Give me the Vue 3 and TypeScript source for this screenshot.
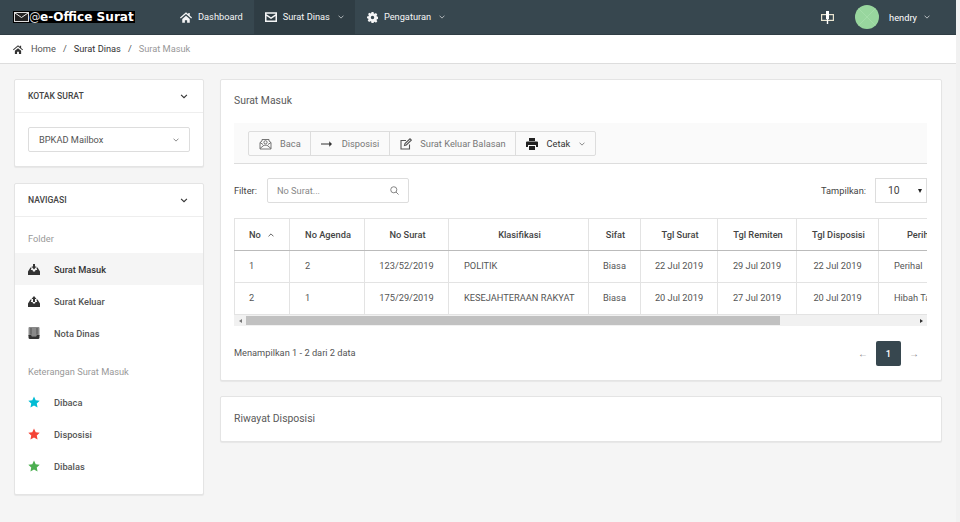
<script setup lang="ts">
const columns = [
  { label: 'No', width: 55 },
  { label: 'No Agenda', width: 75 },
  { label: 'No Surat', width: 84 },
  { label: 'Klasifikasi', width: 140 },
  { label: 'Sifat', width: 52 },
  { label: 'Tgl Surat', width: 77 },
  { label: 'Tgl Remiten', width: 79 },
  { label: 'Tgl Disposisi', width: 82 },
  { label: 'Perihal', width: 90 },
]
const rows = [
  ['1', '2', '123/52/2019', 'POLITIK', 'Biasa', '22 Jul 2019', '29 Jul 2019', '22 Jul 2019', 'Perihal'],
  ['2', '1', '175/29/2019', 'KESEJAHTERAAN RAKYAT', 'Biasa', '20 Jul 2019', '27 Jul 2019', '20 Jul 2019', 'Hibah Tahun'],
]
const leftAligned = [0, 1, 3, 8]
const stars = [
  { label: 'Dibaca', color: '#00bcd4' },
  { label: 'Disposisi', color: '#f44336' },
  { label: 'Dibalas', color: '#4caf50' },
]
</script>

<template>
  <div class="page">
    <div class="main-col">
      <header class="navbar">
        <div class="brand">
          <div class="brand-box">
            <svg class="brand-mail" width="15" height="10" viewBox="0 0 15 10">
              <rect x="0.5" y="0.5" width="14" height="9" fill="#222" stroke="#ddd" />
              <path d="M1 1l6.500 4.500L14 1" fill="none" stroke="#eee" stroke-width="1" />
            </svg>
            <span class="brand-at">@</span>
            <span class="brand-text">e-Office Surat</span>
          </div>
        </div>
        <nav class="nav">
          <a class="nav-item">
            <svg width="12" height="11" viewBox="0 0 16 14"><path d="M8 0L0 7l1 1.200L8 2.300l7 5.900L16 7l-3-2.600V1h-2v1.700zM3 9v5h3.500v-3.500h3V14H13V9L8 4.800z" fill="#fff" /></svg>
            <span>Dashboard</span>
          </a>
          <a class="nav-item active">
            <svg width="12" height="10" viewBox="0 0 16 13"><path d="M0 0h16v13H0zm2 2v.7l6 4 6-4V2zm12 3L8 9 2 5v6h12z" fill="#fff" fill-rule="evenodd" /></svg>
            <span>Surat Dinas</span>
            <svg class="caret" width="6" height="4" viewBox="0 0 8 5"><path d="M.7.7L4 4l3.300-3.300" fill="none" stroke="#fff" stroke-opacity=".85" /></svg>
          </a>
          <a class="nav-item">
            <svg width="11" height="11" viewBox="0 0 16 16"><path d="M6.500 0h3l.4 2.100 1.300.6L13 1.500l2 2-1.200 1.800.6 1.300 2.100.4v3l-2.100.4-.6 1.300 1.200 1.800-2 2-1.800-1.200-1.300.6L9.500 16h-3l-.4-2.100-1.300-.6L3 14.500l-2-2 1.200-1.800-.6-1.300L0 9V6.500l2.100-.4.6-1.300L1.500 3 3.500 1l1.800 1.200 1-.6zM8 5.500a2.500 2.500 0 100 5 2.500 2.500 0 000-5z" fill="#fff" fill-rule="evenodd" /></svg>
            <span>Pengaturan</span>
            <svg class="caret" width="6" height="4" viewBox="0 0 8 5"><path d="M.7.7L4 4l3.300-3.300" fill="none" stroke="#fff" stroke-opacity=".85" /></svg>
          </a>
        </nav>
        <div class="nav-right">
          <svg class="puzzle" width="13" height="13" viewBox="0 0 13 13"><rect x="0.6" y="3.600" width="11.800" height="5.800" fill="none" stroke="#e8e4d0" stroke-width="1.200" /><path d="M5 0h3v8H7.200v5H5.800V8H5z" fill="#fff" /></svg>
          <svg class="avatar" width="24" height="24" viewBox="0 0 24 24"><circle cx="12" cy="12" r="12" fill="#98d69e" /><path d="M3.500 3.500l17 17M20.500 3.500l-17 17" stroke="#a9dfae" stroke-width=".7" /></svg>
          <span class="user">hendry</span>
          <svg class="caret" width="6" height="4" viewBox="0 0 8 5"><path d="M.7.7L4 4l3.300-3.300" fill="none" stroke="#fff" stroke-opacity=".85" /></svg>
        </div>
      </header>

      <div class="breadcrumb">
        <svg width="10" height="9" viewBox="0 0 16 14"><path d="M8 0L0 7l1 1.200L8 2.300l7 5.900L16 7l-3-2.600V1h-2v1.700zM3 9v5h3.500v-3.500h3V14H13V9L8 4.800z" fill="#333" /></svg>
        <span class="crumb first">Home</span>
        <span class="sep">/</span>
        <span class="crumb dark">Surat Dinas</span>
        <span class="sep">/</span>
        <span class="crumb muted">Surat Masuk</span>
      </div>

      <div class="content">
        <aside class="sidebar">
          <section class="card">
            <div class="side-head">
              <span>KOTAK SURAT</span>
              <svg width="8" height="5" viewBox="0 0 9 6"><path d="M1 1l3.500 3.500L8 1" fill="none" stroke="#333" stroke-width="1.300" /></svg>
            </div>
            <div class="side-body">
              <div class="select">
                <span>BPKAD Mailbox</span>
                <svg width="6" height="4" viewBox="0 0 8 5"><path d="M.7.7L4 4l3.300-3.300" fill="none" stroke="#666" /></svg>
              </div>
            </div>
          </section>

          <section class="card">
            <div class="side-head">
              <span>NAVIGASI</span>
              <svg width="8" height="5" viewBox="0 0 9 6"><path d="M1 1l3.500 3.500L8 1" fill="none" stroke="#333" stroke-width="1.300" /></svg>
            </div>
            <div class="side-nav">
              <div class="side-title">Folder</div>
              <a class="side-item current">
                <svg width="12" height="11" viewBox="0 0 12 11"><path d="M0 7.500L2.500 3.500H3.700L2.800 6H4.500L5 7.500h2L7.500 6h1.700l-.9-2.500h1.200L12 7.500V11H0zM5 0h2v2.500h1.500L6 5.500 3.500 2.500H5z" fill="#333" /></svg>
                <span>Surat Masuk</span>
              </a>
              <a class="side-item">
                <svg width="12" height="11" viewBox="0 0 12 11"><path d="M0 7.500L2.500 3.500H3.700L2.800 6H4.500L5 7.500h2L7.500 6h1.700l-.9-2.500h1.200L12 7.500V11H0zM6 0l2.500 3H7v3H5V3H3.500z" fill="#333" /></svg>
                <span>Surat Keluar</span>
              </a>
              <a class="side-item">
                <svg width="12" height="12" viewBox="0 0 11 12"><path d="M1 0h9a1 1 0 011 1v8H0V1a1 1 0 011-1z" fill="#8a8a8a" /><path d="M0 8h2.500l.8 1.200h4.400L8.500 8H11v2.500A1.500 1.500 0 019.500 12h-8A1.500 1.500 0 010 10.500z" fill="#333" /><path d="M2.500 1v6.500M8.500 1v6.500" stroke="#444" stroke-width=".8" /></svg>
                <span>Nota Dinas</span>
              </a>
              <div class="side-title second">Keterangan Surat Masuk</div>
              <a v-for="s in stars" :key="s.label" class="side-item">
                <svg width="12" height="12" viewBox="0 0 24 24"><path d="M12 1l3.400 7.300 8 1-5.900 5.500 1.600 8L12 18.800 4.900 22.800l1.600-8L.6 9.300l8-1z" :fill="s.color" /></svg>
                <span>{{ s.label }}</span>
              </a>
            </div>
          </section>
        </aside>

        <main class="main">
          <section class="card mail-card">
            <h2 class="card-title">Surat Masuk</h2>
            <div class="toolbar">
              <div class="btn-group">
                <div class="tbtn">
                  <svg width="13" height="13" viewBox="0 0 13 13" fill="none" stroke="#666" stroke-width=".9"><path d="M1 5.500L3 4V2.500h7V4l2 1.500V12H1z" /><path d="M1 11.500L5 8.200h3l4 3.300M1 5.500L4 7.500M12 5.500L9 7.500" /><circle cx="6.500" cy="5.300" r="1.600" /></svg>
                  <span>Baca</span>
                </div>
                <div class="tbtn wide-gap">
                  <svg width="11" height="8" viewBox="0 0 12 8"><path d="M0 3.400h9V1l3 3-3 3V4.600H0z" fill="#333" /></svg>
                  <span>Disposisi</span>
                </div>
                <div class="tbtn">
                  <svg width="12" height="12" viewBox="0 0 12 12" fill="none" stroke="#555" stroke-width="1.100"><path d="M9.500 6.500V11H1V2.500h5" /><path d="M4.500 7.500l.5-2L10 .8l1.300 1.300-5 4.800z" /></svg>
                  <span>Surat Keluar Balasan</span>
                </div>
                <div class="tbtn strong">
                  <svg width="12" height="12" viewBox="0 0 12 12"><path d="M3 0h6v3H3zM1 3.500h10a1 1 0 011 1V9h-2V7H2v2H0V4.500a1 1 0 011-1zM3 8h6v4H3z" fill="#222" /></svg>
                  <span>Cetak</span>
                  <svg class="caret-small" width="6" height="4" viewBox="0 0 8 5"><path d="M.7.7L4 4l3.300-3.300" fill="none" stroke="#666" /></svg>
                </div>
              </div>
            </div>

            <div class="filters">
              <label class="filter-label">Filter:</label>
              <div class="search">
                <span class="placeholder">No Surat...</span>
                <svg width="9" height="9" viewBox="0 0 10 10" fill="none" stroke="#777"><circle cx="4.200" cy="4.200" r="3.400" /><path d="M6.700 6.700L9.500 9.500" /></svg>
              </div>
              <label class="filter-label show">Tampilkan:</label>
              <div class="perpage">
                <span>10</span>
                <i class="triangle"></i>
              </div>
            </div>

            <div class="table-wrap">
              <table class="table">
                <colgroup>
                  <col v-for="c in columns" :key="c.label" :style="{ width: c.width + 'px' }" />
                </colgroup>
                <thead>
                  <tr>
                    <th v-for="(c, i) in columns" :key="c.label" :class="{ 'th-left': i === 0 }">
                      {{ c.label }}
                      <svg v-if="i === 0" class="sort" width="6" height="4" viewBox="0 0 8 5"><path d="M.7 4.300L4 1l3.300 3.300" fill="none" stroke="#333" /></svg>
                    </th>
                  </tr>
                </thead>
                <tbody>
                  <tr v-for="r in rows" :key="r[0]">
                    <td v-for="(v, i) in r" :key="i" :class="{ left: leftAligned.includes(i) }">{{ v }}</td>
                  </tr>
                </tbody>
              </table>
            </div>
            <div class="hscroll">
              <i class="arrow-l"></i>
              <div class="track"><div class="thumb"></div></div>
              <i class="arrow-r"></i>
            </div>

            <div class="pager-row">
              <span class="info">Menampilkan 1 - 2 dari 2 data</span>
              <div class="pager">
                <span class="pg-arrow">←</span>
                <span class="pg-active">1</span>
                <span class="pg-arrow">→</span>
              </div>
            </div>
          </section>

          <section class="card history">
            <h2 class="card-title plain">Riwayat Disposisi</h2>
          </section>
        </main>
      </div>
    </div>
    <div class="strip"></div>
  </div>
</template>

<style>
html, body { margin: 0; padding: 0; background: #f5f5f5; overflow: hidden; }
</style>

<style scoped>
.page { width: 960px; height: 522px; display: flex; overflow: hidden; font-family: Roboto, "Liberation Sans", sans-serif; font-size: 9.25px; color: #333; background: #f5f5f5; }
.main-col { width: 956px; flex: none; }
.strip { width: 4px; flex: none; background: #f1f1f1; }

.navbar { height: 34px; background: #37474f; display: flex; align-items: stretch; color: #fff; border-bottom: 1px solid #2f3d44; }
.brand { width: 180px; box-sizing: border-box; padding-left: 13px; display: flex; align-items: center; height: 34px; flex: none; }
.brand-box { display: flex; align-items: center; background: #000; height: 12px; width: 122px; padding-left: 1px; box-sizing: border-box; overflow: hidden; }
.brand-mail { flex: none; }
.brand-at { color: #ddd; font-family: "DejaVu Sans", sans-serif; font-size: 11.5px; line-height: 12px; width: 11px; flex: none; overflow: hidden; }
.brand-text { color: #fff; font-family: "DejaVu Sans", sans-serif; font-weight: 700; font-size: 12.1px; line-height: 12px; white-space: nowrap; }
.nav { display: flex; align-items: stretch; }
.nav-item { display: flex; align-items: center; gap: 6px; padding: 0 11px 0 0; color: #fff; opacity: .95; }
.nav-item span { margin-bottom: 1px; }
.nav-item.active { background: #2f3d44; padding: 0 11px; }
.nav-item:nth-child(3) { padding-left: 12px; }
.caret { margin-left: 2px; flex: none; }
.nav-right { margin-left: auto; display: flex; align-items: center; padding-right: 26px; }
.puzzle { margin-right: 21px; }
.avatar { margin-right: 10px; }
.user { margin-right: 5px; }

.breadcrumb { height: 28px; background: #fff; border-bottom: 1px solid #ddd; display: flex; align-items: center; padding-left: 13px; color: #333; }
.crumb, .sep { margin-bottom: 1px; }
.crumb.first { margin-left: 8px; color: #555; }
.crumb.dark { color: #333; }
.crumb.muted { color: #999; }
.sep { margin-left: 7px; margin-right: 7px; color: #555; }

.content { display: flex; gap: 16px; padding: 15px 14px 0 14px; align-items: flex-start; }
.sidebar { width: 190px; flex: none; display: flex; flex-direction: column; gap: 16px; }
.main { flex: 1; min-width: 0; display: flex; flex-direction: column; gap: 15px; }
.card { background: #fff; border: 1px solid #e4e4e4; border-radius: 2px; box-shadow: 0 1px 1px rgba(0,0,0,.06); box-sizing: border-box; }

.side-head { height: 33px; box-sizing: border-box; display: flex; align-items: center; justify-content: space-between; padding: 0 15px 0 13px; border-bottom: 1px solid #eee; font-size: 8.6px; font-weight: 500; color: #444; }
.side-body { padding: 14px 13px; }
.select { height: 25px; box-sizing: border-box; border: 1px solid #ddd; border-radius: 2px; display: flex; align-items: center; justify-content: space-between; padding: 0 10px; color: #555; }
.side-nav { padding: 16px 0 12px; }
.side-title { padding-left: 13px; color: #999; line-height: 12px; margin-bottom: 8px; }
.side-title.second { margin-top: 17px; margin-bottom: 8px; }
.side-item { height: 32px; display: flex; align-items: center; padding-left: 13px; gap: 14px; color: #555; font-weight: 500; }
.side-item svg { flex: none; }
.side-item.current { background: #f5f5f5; color: #333; }

.mail-card { height: 302px; padding: 0 14px 0 13px; }
.card-title { margin: 0; font-weight: 400; font-size: 10.4px; color: #5a5a5a; line-height: 41px; height: 43px; }
.toolbar { height: 41px; box-sizing: border-box; background: #fafafa; border-bottom: 1px solid #ddd; padding: 8px 14px 0; }
.btn-group { display: inline-flex; height: 25px; box-sizing: border-box; border: 1px solid #ddd; border-radius: 2px; background: #fafafa; }
.tbtn { display: flex; align-items: center; gap: 8px; padding: 0 9px 0 10px; color: #777; border-left: 1px solid #ddd; }
.tbtn:first-child { border-left: 0; }
.tbtn.wide-gap { gap: 10px; padding-right: 10px; }
.tbtn.strong { color: #333; gap: 9px; padding-right: 10px; }
.caret-small { flex: none; }

.filters { display: flex; align-items: center; height: 25px; margin-top: 14px; }
.filter-label { color: #444; }
.search { width: 142px; height: 25px; box-sizing: border-box; border: 1px solid #ddd; border-radius: 2px; display: flex; align-items: center; justify-content: space-between; padding: 0 9px; margin-left: 10px; }
.placeholder { color: #888; }
.filter-label.show { margin-left: auto; }
.perpage { width: 52px; height: 25px; box-sizing: border-box; border: 1px solid #ddd; display: flex; align-items: center; justify-content: space-between; padding: 0 4px 0 12px; margin-left: 9px; color: #444; font-size: 10.4px; }
.triangle { width: 0; height: 0; border-left: 2.500px solid transparent; border-right: 2.500px solid transparent; border-top: 4px solid #222; }

.table-wrap { margin-top: 15px; overflow: hidden; }
.table { border-collapse: collapse; table-layout: fixed; width: 734px; }
.table th, .table td { border: 1px solid #e3e3e3; text-align: center; height: 32px; box-sizing: border-box; padding: 0 10px; white-space: nowrap; overflow: hidden; color: #555; }
.table td { padding-bottom: 2px; }
.table th { font-weight: 500; color: #444; border-bottom: 1px solid #bbb; padding-left: 11px; padding-right: 9px; }
.table th.th-left, .table td.left { text-align: left; padding-left: 14px; }
.table td:nth-child(2), .table td:nth-child(4) { padding-left: 15px; }
.table td:last-child { padding-left: 15px; }
.table th:last-child { text-align: left; padding-left: 28px; }
.sort { margin-left: 5px; vertical-align: 1px; }

.hscroll { height: 11px; display: flex; align-items: center; background: #f1f1f1; }
.track { flex: 1; height: 9px; }
.thumb { width: 534px; height: 9px; background: #c1c1c1; }
.arrow-l, .arrow-r { width: 12px; height: 9px; flex: none; display: flex; align-items: center; justify-content: center; }
.arrow-l::before { content: ""; border-top: 2.500px solid transparent; border-bottom: 2.500px solid transparent; border-right: 3px solid #777; }
.arrow-r::before { content: ""; border-top: 2.500px solid transparent; border-bottom: 2.500px solid transparent; border-left: 3px solid #333; }

.pager-row { display: flex; align-items: center; justify-content: space-between; height: 25px; margin-top: 15px; }
.info { color: #555; padding-bottom: 2px; }
.pager { display: flex; align-items: center; }
.pg-arrow { width: 26px; text-align: center; color: #888; font-size: 10px; }
.pg-active { width: 25px; height: 25px; box-sizing: border-box; padding-bottom: 1px; background: #37474f; color: #fff; border-radius: 2px; display: flex; align-items: center; justify-content: center; font-weight: 500; }

.history { height: 46px; padding: 0 13px; }
.card-title.plain { font-size: 10.4px; line-height: 43px; height: 44px; }
</style>
